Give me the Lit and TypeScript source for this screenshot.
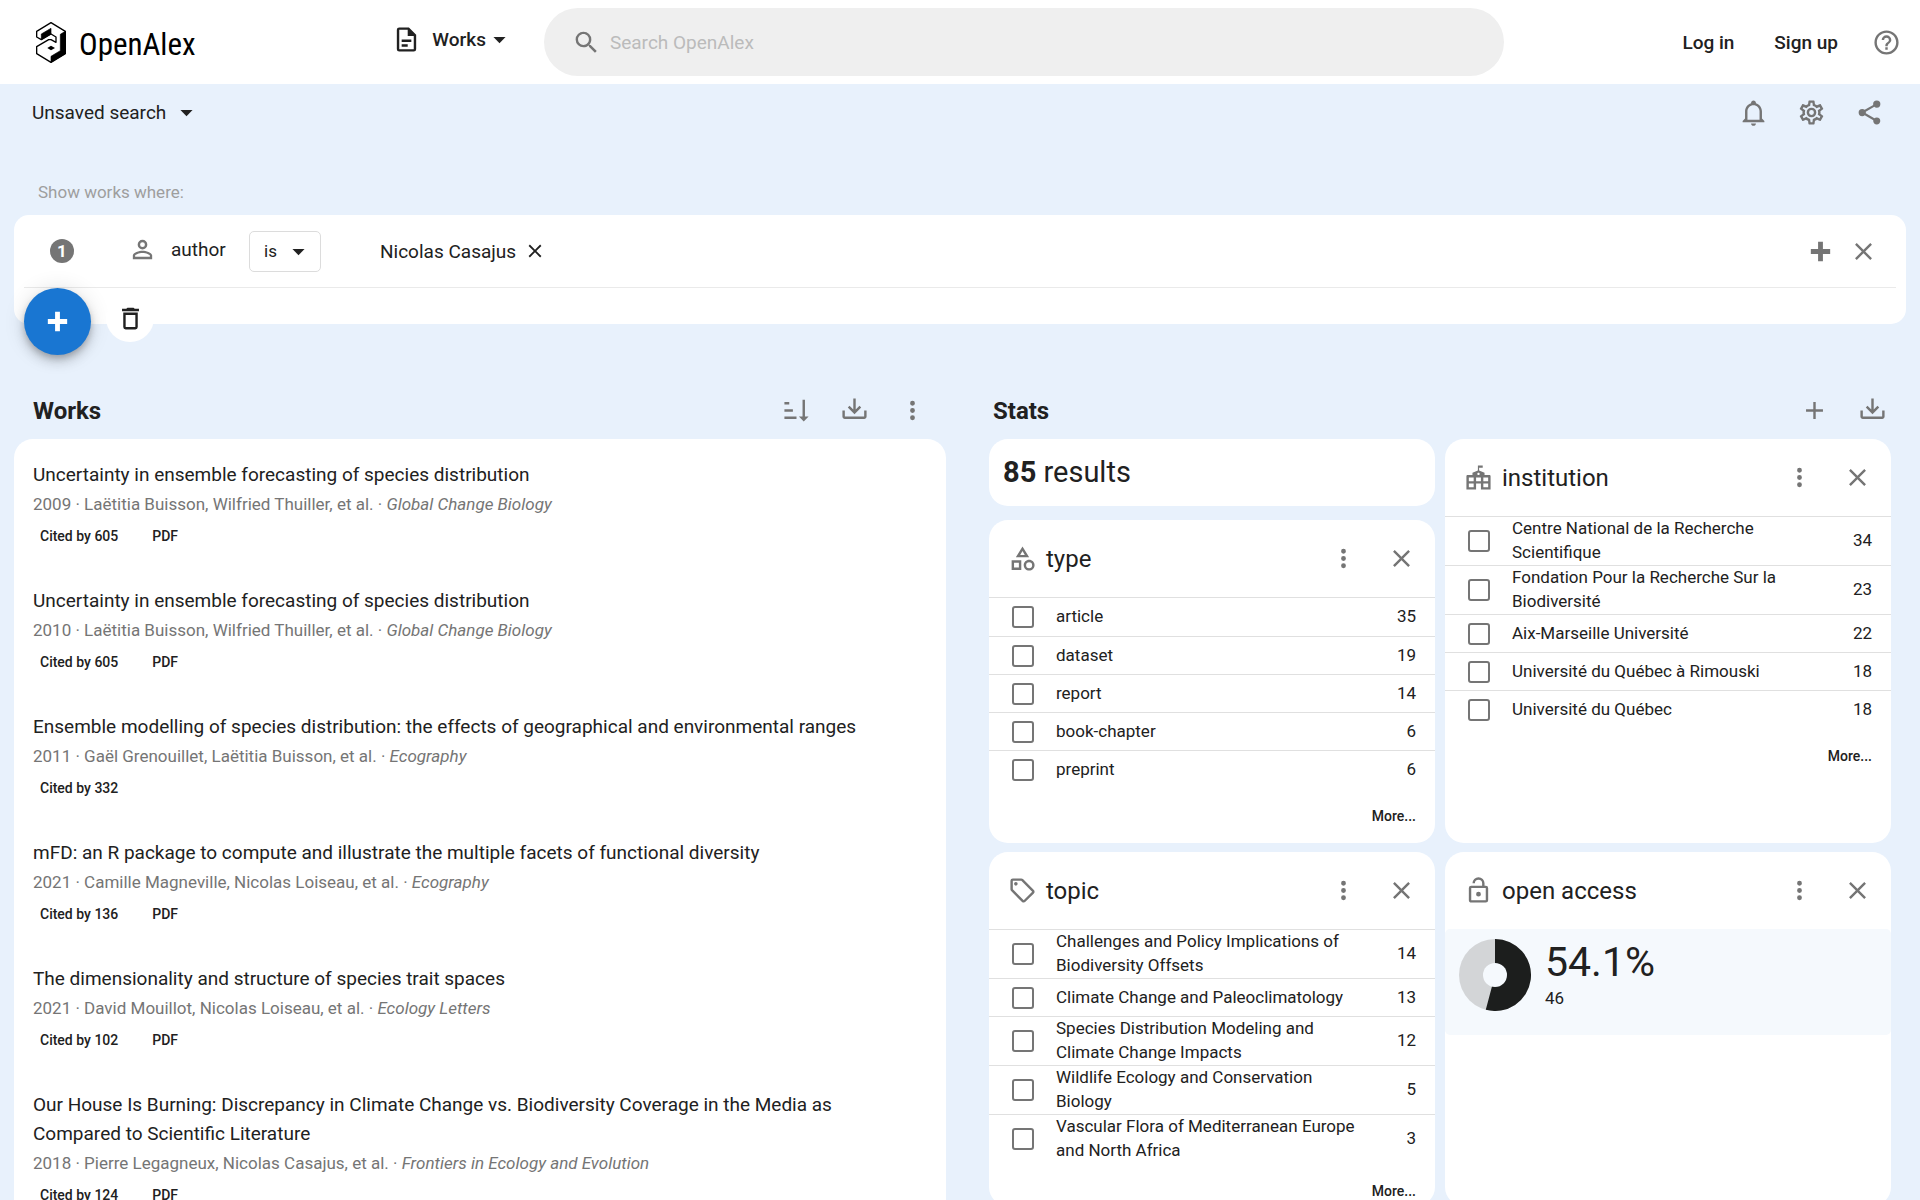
import { LitElement, html, css, svg, nothing } from "lit";
import { customElement, property } from "lit/decorators.js";

const ICONS: Record<string, string> = {
  document:
    "M6,2A2,2 0 0,0 4,4V20A2,2 0 0,0 6,22H18A2,2 0 0,0 20,20V8L14,2H6M6,4H13V9H18V20H6V4M8,12V14H16V12H8M8,16V18H13V16H8Z",
  menuDown: "M7,10L12,15L17,10H7Z",
  magnify:
    "M9.5,3A6.5,6.5 0 0,1 16,9.5C16,11.11 15.41,12.59 14.44,13.73L14.71,14H15.5L20.5,19L19,20.5L14,15.5V14.71L13.73,14.44C12.59,15.41 11.11,16 9.5,16A6.5,6.5 0 0,1 3,9.5A6.5,6.5 0 0,1 9.5,3M9.5,5C7,5 5,7 5,9.5C5,12 7,14 9.5,14C12,14 14,12 14,9.5C14,7 12,5 9.5,5Z",
  help: "M11,18H13V16H11V18M12,2A10,10 0 0,0 2,12A10,10 0 0,0 12,22A10,10 0 0,0 22,12A10,10 0 0,0 12,2M12,20C7.59,20 4,16.41 4,12C4,7.59 7.59,4 12,4C16.41,4 20,7.59 20,12C20,16.41 16.41,20 12,20M12,6A4,4 0 0,0 8,10H10A2,2 0 0,1 12,8A2,2 0 0,1 14,10C14,12 11,11.75 11,15H13C13,12.75 16,12.5 16,10A4,4 0 0,0 12,6Z",
  bell: "M10 21H14C14 22.1 13.1 23 12 23S10 22.1 10 21M21 19V20H3V19L5 17V11C5 7.9 7.03 5.17 10 4.29C10 4.19 10 4.1 10 4C10 2.9 10.9 2 12 2S14 2.9 14 4C14 4.1 14 4.19 14 4.29C16.97 5.17 19 7.9 19 11V17L21 19M17 11C17 8.24 14.76 6 12 6S7 8.24 7 11V18H17V11Z",
  cog: "M12,8A4,4 0 0,1 16,12A4,4 0 0,1 12,16A4,4 0 0,1 8,12A4,4 0 0,1 12,8M12,10A2,2 0 0,0 10,12A2,2 0 0,0 12,14A2,2 0 0,0 14,12A2,2 0 0,0 12,10M10,22C9.75,22 9.54,21.82 9.5,21.58L9.13,18.93C8.5,18.68 7.96,18.34 7.44,17.94L4.95,18.95C4.73,19.03 4.46,18.95 4.34,18.73L2.34,15.27C2.21,15.05 2.27,14.78 2.46,14.63L4.57,12.97L4.5,12L4.57,11L2.46,9.37C2.27,9.22 2.21,8.95 2.34,8.73L4.34,5.27C4.46,5.05 4.73,4.96 4.95,5.05L7.44,6.05C7.96,5.66 8.5,5.32 9.13,5.07L9.5,2.42C9.54,2.18 9.75,2 10,2H14C14.25,2 14.46,2.18 14.5,2.42L14.87,5.07C15.5,5.32 16.04,5.66 16.56,6.05L19.05,5.05C19.27,4.96 19.54,5.05 19.66,5.27L21.66,8.73C21.79,8.95 21.73,9.22 21.54,9.37L19.43,11L19.5,12L19.43,13L21.54,14.63C21.73,14.78 21.79,15.05 21.66,15.27L19.66,18.73C19.54,18.95 19.27,19.04 19.05,18.95L16.56,17.95C16.04,18.34 15.5,18.68 14.87,18.93L14.5,21.58C14.46,21.82 14.25,22 14,22H10M11.25,4L10.88,6.61C9.68,6.86 8.62,7.5 7.85,8.39L5.44,7.35L4.69,8.65L6.8,10.2C6.4,11.37 6.4,12.64 6.8,13.8L4.68,15.36L5.43,16.66L7.86,15.62C8.63,16.5 9.68,17.14 10.87,17.38L11.24,20H12.76L13.13,17.39C14.32,17.14 15.37,16.5 16.14,15.62L18.57,16.66L19.32,15.36L17.2,13.81C17.6,12.64 17.6,11.37 17.2,10.2L19.31,8.65L18.56,7.35L16.15,8.39C15.38,7.5 14.32,6.86 13.12,6.62L12.75,4H11.25Z",
  share:
    "M18,16.08C17.24,16.08 16.56,16.38 16.04,16.85L8.91,12.7C8.96,12.47 9,12.24 9,12C9,11.76 8.96,11.53 8.91,11.3L15.96,7.19C16.5,7.69 17.21,8 18,8A3,3 0 0,0 21,5A3,3 0 0,0 18,2A3,3 0 0,0 15,5C15,5.24 15.04,5.47 15.09,5.7L8.04,9.81C7.5,9.31 6.79,9 6,9A3,3 0 0,0 3,12A3,3 0 0,0 6,15C6.79,15 7.5,14.69 8.04,14.19L15.16,18.34C15.11,18.55 15.08,18.77 15.08,19C15.08,20.61 16.39,21.91 18,21.91C19.61,21.91 20.92,20.61 20.92,19A2.92,2.92 0 0,0 18,16.08Z",
  account:
    "M12,4A4,4 0 0,1 16,8A4,4 0 0,1 12,12A4,4 0 0,1 8,8A4,4 0 0,1 12,4M12,6A2,2 0 0,0 10,8A2,2 0 0,0 12,10A2,2 0 0,0 14,8A2,2 0 0,0 12,6M12,13C14.67,13 20,14.33 20,17V20H4V17C4,14.33 9.33,13 12,13M12,14.9C9.03,14.9 5.9,16.36 5.9,17V18.1H18.1V17C18.1,16.36 14.97,14.9 12,14.9Z",
  plus: "M19,13H13V19H11V13H5V11H11V5H13V11H19V13Z",
  plusThick: "M20 14H14V20H10V14H4V10H10V4H14V10H20V14Z",
  close:
    "M19,6.41L17.59,5L12,10.59L6.41,5L5,6.41L10.59,12L5,17.59L6.41,19L12,13.41L17.59,19L19,17.59L13.41,12L19,6.41Z",
  trash:
    "M6,19A2,2 0 0,0 8,21H16A2,2 0 0,0 18,19V7H6V19M8,9H16V19H8V9M15.5,4L14.5,3H9.5L8.5,4H5V6H19V4H15.5Z",
  sort: "M19 17H22L18 21L14 17H17V3H19V17M2 17H12V19H2V17M6 5V7H2V5H6M2 11H9V13H2V11Z",
  download:
    "M2 12H4V17H20V12H22V17C22 18.11 21.11 19 20 19H4C2.9 19 2 18.11 2 17V12M12 15L17.55 9.54L16.13 8.13L13 11.25V2H11V11.25L7.88 8.13L6.46 9.55L12 15Z",
  dots: "M12,16A2,2 0 0,1 14,18A2,2 0 0,1 12,20A2,2 0 0,1 10,18A2,2 0 0,1 12,16M12,10A2,2 0 0,1 14,12A2,2 0 0,1 12,14A2,2 0 0,1 10,12A2,2 0 0,1 12,10M12,4A2,2 0 0,1 14,6A2,2 0 0,1 12,8A2,2 0 0,1 10,6A2,2 0 0,1 12,4Z",
  shapes:
    "M11,13.5V21.5H3V13.5H11M9,15.5H5V19.5H9V15.5M12,2L17.5,11H6.5L12,2M12,5.86L10.08,9H13.92L12,5.86M17.5,13C20,13 22,15 22,17.5C22,20 20,22 17.5,22C15,22 13,20 13,17.5C13,15 15,13 17.5,13M17.5,15A2.5,2.5 0 0,0 15,17.5A2.5,2.5 0 0,0 17.5,20A2.5,2.5 0 0,0 20,17.5A2.5,2.5 0 0,0 17.5,15Z",
  tag: "M21.41 11.58L12.41 2.58A2 2 0 0 0 11 2H4A2 2 0 0 0 2 4V11A2 2 0 0 0 2.59 12.42L11.59 21.42A2 2 0 0 0 13 22A2 2 0 0 0 14.41 21.41L21.41 14.41A2 2 0 0 0 22 13A2 2 0 0 0 21.41 11.58M13 20L4 11V4H11L20 13M6.5 5A1.5 1.5 0 1 1 5 6.5A1.5 1.5 0 0 1 6.5 5Z",
  lockOpen:
    "M18,20V10H6V20H18M18,8A2,2 0 0,1 20,10V20A2,2 0 0,1 18,22H6C4.89,22 4,21.1 4,20V10A2,2 0 0,1 6,8H15V6A3,3 0 0,0 12,3A3,3 0 0,0 9,6H7A5,5 0 0,1 12,1A5,5 0 0,1 17,6V8H18M12,17A2,2 0 0,1 10,15A2,2 0 0,1 12,13A2,2 0 0,1 14,15A2,2 0 0,1 12,17Z",
  townHall:
    "M21 10H17V8L12.5 6.2V4H15.5V2H11.5V6.2L7 8V10H3C2.45 10 2 10.45 2 11V22H10V17H14V22H22V11C22 10.45 21.55 10 21 10M8 20H4V17H8V20M8 15H4V12H8V15M12 8C12.55 8 13 8.45 13 9S12.55 10 12 10 11 9.55 11 9 11.45 8 12 8M14 15H10V12H14V15M20 20H16V17H20V20M20 15H16V12H20V15Z",
};

const icon = (name: string, cls = "") => html`
  <svg class="icon ${cls}" viewBox="0 0 24 24" aria-hidden="true">${svg`<path d=${ICONS[name]}></path>`}</svg>
`;

const base = css`
  * {
    box-sizing: border-box;
  }
  h1, h2, h3, p, ul {
    margin: 0;
    padding: 0;
    font-size: inherit;
    font-weight: 400;
  }
  ul {
    list-style: none;
  }
  a {
    color: inherit;
    text-decoration: none;
  }
  button {
    display: flex;
    align-items: center;
    justify-content: center;
    padding: 0;
    border: 0;
    background: none;
    color: inherit;
    font: inherit;
    cursor: pointer;
  }
  .icon {
    display: block;
    flex: none;
    width: 29px;
    height: 29px;
    fill: currentColor;
  }
  .muted {
    color: #757575;
  }
  .icon-button {
    width: 58px;
    height: 58px;
    color: #757575;
  }
`;

interface Work {
  title: string;
  year: number;
  authors: string;
  venue: string;
  cited: number;
  pdf: boolean;
}

const WORKS: Work[] = [
  { title: "Uncertainty in ensemble forecasting of species distribution", year: 2009, authors: "Laëtitia Buisson, Wilfried Thuiller, et al.", venue: "Global Change Biology", cited: 605, pdf: true },
  { title: "Uncertainty in ensemble forecasting of species distribution", year: 2010, authors: "Laëtitia Buisson, Wilfried Thuiller, et al.", venue: "Global Change Biology", cited: 605, pdf: true },
  { title: "Ensemble modelling of species distribution: the effects of geographical and environmental ranges", year: 2011, authors: "Gaël Grenouillet, Laëtitia Buisson, et al.", venue: "Ecography", cited: 332, pdf: false },
  { title: "mFD: an R package to compute and illustrate the multiple facets of functional diversity", year: 2021, authors: "Camille Magneville, Nicolas Loiseau, et al.", venue: "Ecography", cited: 136, pdf: true },
  { title: "The dimensionality and structure of species trait spaces", year: 2021, authors: "David Mouillot, Nicolas Loiseau, et al.", venue: "Ecology Letters", cited: 102, pdf: true },
  { title: "Our House Is Burning: Discrepancy in Climate Change vs. Biodiversity Coverage in the Media as Compared to Scientific Literature", year: 2018, authors: "Pierre Legagneux, Nicolas Casajus, et al.", venue: "Frontiers in Ecology and Evolution", cited: 124, pdf: true },
];

type Row = [string, number];

const TYPES: Row[] = [["article", 35], ["dataset", 19], ["report", 14], ["book-chapter", 6], ["preprint", 6]];
const INSTITUTIONS: Row[] = [
  ["Centre National de la Recherche Scientifique", 34],
  ["Fondation Pour la Recherche Sur la Biodiversité", 23],
  ["Aix-Marseille Université", 22],
  ["Université du Québec à Rimouski", 18],
  ["Université du Québec", 18],
];
const TOPICS: Row[] = [
  ["Challenges and Policy Implications of Biodiversity Offsets", 14],
  ["Climate Change and Paleoclimatology", 13],
  ["Species Distribution Modeling and Climate Change Impacts", 12],
  ["Wildlife Ecology and Conservation Biology", 5],
  ["Vascular Flora of Mediterranean Europe and North Africa", 3],
];

@customElement("stat-card")
class StatCard extends LitElement {
  @property() name = "";
  @property() glyph = "";
  @property({ attribute: false }) rows: Row[] = [];

  static styles = [
    base,
    css`
      :host {
        display: block;
        background: #fff;
        border-radius: 19px;
        overflow: hidden;
      }
      .head {
        display: flex;
        align-items: center;
        height: 77px;
        padding: 0 5px 0 19px;
      }
      .name {
        flex: 1;
        margin-left: 9px;
        font-size: 24px;
        line-height: 38px;
      }
      .row {
        display: flex;
        align-items: center;
        min-height: 39px;
        padding-right: 19px;
        border-top: 1px solid #e0e0e0;
        font-size: 17px;
        line-height: 24px;
      }
      .row + .row {
        min-height: 38px;
      }
      .box {
        flex: none;
        appearance: none;
        width: 22px;
        height: 22px;
        margin: 0 22px 0 23px;
        border: 2px solid #757575;
        border-radius: 3px;
      }
      .label {
        flex: 1;
        padding-right: 40px;
      }
      .value {
        min-width: 20px;
        text-align: right;
      }
      .label,
      .value {
        margin-top: -1px;
        margin-bottom: 1px;
      }
      .more {
        margin: 13px 0 0 auto;
        padding: 0 19px;
        height: 30px;
        font-size: 14px;
        font-weight: 500;
      }
    `,
  ];

  render() {
    return html`
      <div class="head">
        ${icon(this.glyph, "muted")}
        <h3 class="name">${this.name}</h3>
        <button class="icon-button" aria-label="${this.name} options">${icon("dots")}</button>
        <button class="icon-button" aria-label="Remove ${this.name}">${icon("close")}</button>
      </div>
      ${this.rows.length
        ? html`
            <ul>
              ${this.rows.map(
                ([label, count], i) => html`
                  <li class="row">
                    <input class="box" type="checkbox" id="box-${i}" />
                    <label class="label" for="box-${i}">${label}</label>
                    <span class="value">${count}</span>
                  </li>
                `
              )}
            </ul>
            <button class="more">More...</button>
          `
        : nothing}
      <slot></slot>
    `;
  }
}

@customElement("app-root")
class AppRoot extends LitElement {
  static styles = [
    base,
    css`
      :host {
        display: block;
        height: 100vh;
        overflow: hidden;
        background: #e8f1fc;
        color: #212121;
        font-family: Roboto, "Liberation Sans", sans-serif;
        font-size: 19px;
        line-height: 29px;
      }
      .header {
        display: grid;
        grid-template-columns: 28.33% 50% 1fr;
        align-items: center;
        height: 84px;
        background: #fff;
      }
      .start {
        display: flex;
        align-items: center;
        justify-content: space-between;
        padding: 0 30px 0 35px;
      }
      .brand {
        display: flex;
        align-items: center;
        gap: 12px;
        color: #000;
        font-family: "Liberation Sans Narrow", "Roboto Condensed", Roboto, sans-serif;
        font-size: 31px;
        line-height: 40px;
      }
      .brand span {
        padding-top: 6px;
      }
      .logo {
        width: 32px;
        height: 43px;
      }
      .entity {
        gap: 11px;
        padding-bottom: 5px;
        font-weight: 500;
      }
      .entity .caret {
        margin-left: -12px;
      }
      .search {
        display: flex;
        align-items: center;
        gap: 9px;
        height: 68px;
        padding: 0 28px;
        border-radius: 34px;
        background: #efefef;
      }
      .search input {
        flex: 1;
        min-width: 0;
        padding: 0;
        border: 0;
        outline: 0;
        background: none;
        color: inherit;
        font: inherit;
      }
      .search input::placeholder {
        color: #bbb;
        opacity: 1;
      }
      .end {
        display: flex;
        align-items: center;
        justify-content: flex-end;
        gap: 40px;
        padding-right: 19px;
        font-weight: 500;
      }
      .end .icon-button {
        width: 29px;
        margin-left: -6px;
      }
      .toolbar {
        display: flex;
        align-items: center;
        justify-content: space-between;
        height: 57px;
        padding: 0 22px 0 32px;
      }
      .saved {
        gap: 6px;
      }
      .actions {
        display: flex;
        align-items: center;
      }
      .prompt {
        margin-top: 37px;
        padding: 0 38px;
        color: #9e9e9e;
        font-size: 17px;
        line-height: 28px;
      }
      .filters {
        margin: 9px 14px 0;
        padding: 0 10px;
        height: 109px;
        border-radius: 15px;
        background: #fff;
      }
      .filter {
        display: flex;
        align-items: center;
        height: 73px;
        border-bottom: 1px solid #eaeaea;
      }
      .number {
        display: flex;
        align-items: center;
        justify-content: center;
        width: 24px;
        height: 24px;
        margin: 0 54px 0 26px;
        border-radius: 50%;
        background: #757575;
        color: #fff;
        font-size: 17px;
        font-weight: 700;
      }
      .field {
        display: flex;
        align-items: center;
        gap: 14px;
        width: 121px;
        padding-bottom: 4px;
      }
      .operator {
        position: relative;
        display: flex;
        align-items: center;
        margin-right: 59px;
      }
      .operator select {
        appearance: none;
        width: 72px;
        height: 41px;
        padding: 0 14px;
        border: 1px solid #dcdcdc;
        border-radius: 5px;
        background: #fff;
        color: inherit;
        font: inherit;
        font-size: 17px;
      }
      .operator .icon {
        position: absolute;
        right: 8px;
        pointer-events: none;
      }
      .person {
        gap: 8px;
        margin-right: auto;
      }
      .person .icon {
        width: 22px;
        height: 22px;
      }
      .row-actions {
        display: flex;
        gap: 14px;
        margin-right: 18px;
      }
      .row-actions button {
        width: 29px;
        height: 29px;
      }
      .under {
        display: flex;
        align-items: flex-start;
        gap: 15px;
      }
      .add {
        width: 67px;
        height: 67px;
        border-radius: 50%;
        background: #1976d2;
        color: #fff;
        box-shadow: 0 4px 6px -1px rgba(0, 0, 0, 0.2), 0 7px 12px rgba(0, 0, 0, 0.14), 0 1px 22px rgba(0, 0, 0, 0.12);
      }
      .clear {
        width: 48px;
        height: 48px;
        margin-top: 6px;
        border-radius: 50%;
        background: #fff;
      }
      .columns {
        display: grid;
        grid-template-columns: 1fr 1fr;
        margin-top: 57px;
      }
      .works {
        padding: 0 14px;
      }
      .stats {
        padding: 0 29px;
      }
      .column-head {
        display: flex;
        align-items: center;
        height: 58px;
      }
      .works .column-head {
        padding: 0 5px 0 19px;
      }
      .stats .column-head {
        padding: 0 0 0 4px;
        margin-right: -10px;
      }
      .column-title {
        flex: 1;
        padding-top: 2px;
        font-size: 24px;
        font-weight: 700;
      }
      .results {
        padding: 21px 34px 21px 19px;
        border-radius: 19px;
        background: #fff;
      }
      .work {
        padding-bottom: 34px;
      }
      .meta {
        font-size: 17px;
        line-height: 30px;
        color: #757575;
      }
      .chips {
        display: flex;
        gap: 34px;
        padding: 1px 0 0 7px;
        font-size: 14px;
        line-height: 32px;
        font-weight: 500;
      }
      .cards {
        display: grid;
        grid-template-columns: 1fr 1fr;
        gap: 9px 10px;
      }
      .stack {
        display: flex;
        flex-direction: column;
        gap: 14px;
      }
      .stack stat-card {
        height: 323px;
      }
      .count {
        height: 67px;
        padding: 0 14px;
        border-radius: 19px;
        background: #fff;
        font-size: 29px;
        line-height: 66px;
      }
      .share {
        display: flex;
        gap: 14px;
        height: 106px;
        padding: 10px 14px;
        border-radius: 5px;
        background: #f5f9fd;
      }
      .donut {
        width: 72px;
        height: 72px;
      }
      .percent {
        font-size: 41px;
        line-height: 47px;
      }
      .amount {
        font-size: 17px;
        line-height: 24px;
      }
    `,
  ];

  private renderLogo() {
    return html`
      <svg class="logo" viewBox="16 15 96 129" aria-hidden="true">
        <path
          d="M64 20L21 46V63L35 71L64 54L79 63V79L64 71H57L21 92V113L64 139L107 113V46Z"
          fill="#fff" stroke="#000" stroke-width="4" stroke-linejoin="round"></path>
        <path d="M35 71V54L64 37V54Z" stroke="#000" stroke-width="2"></path>
        <path d="M107 46V113L64 139V121L92 104V55Z" stroke="#000" stroke-width="2"></path>
        <path d="M53 96L64 89L76 96L64 103Z"></path>
      </svg>
    `;
  }

  private renderWork(work: Work) {
    return html`
      <li class="work">
        <a href="#"><h3 class="title">${work.title}</h3></a>
        <p class="meta">${work.year} · ${work.authors} · <i>${work.venue}</i></p>
        <div class="chips">
          <a href="#">Cited by ${work.cited}</a>
          ${work.pdf ? html`<a href="#">PDF</a>` : nothing}
        </div>
      </li>
    `;
  }

  private renderDonut(share: number) {
    const angle = 2 * Math.PI * share;
    const x = 36 + 36 * Math.sin(angle);
    const y = 36 - 36 * Math.cos(angle);
    return html`
      <svg class="donut" viewBox="0 0 72 72" role="img" aria-label="Open access share">
        <circle cx="36" cy="36" r="36" fill="#d3d5d7"></circle>
        <path d="M36 36V0A36 36 0 ${share > 0.5 ? 1 : 0} 1 ${x} ${y}Z" fill="#1c1e1d"></path>
        <circle cx="36" cy="36" r="12" fill="#f5f9fd"></circle>
      </svg>
    `;
  }

  render() {
    return html`
      <header class="header">
        <div class="start">
          <a class="brand" href="#">${this.renderLogo()}<span>OpenAlex</span></a>
          <button class="entity">${icon("document")}<span>Works</span>${icon("menuDown", "caret")}</button>
        </div>
        <label class="search">
          ${icon("magnify", "muted")}
          <input type="search" placeholder="Search OpenAlex" aria-label="Search OpenAlex" />
        </label>
        <nav class="end">
          <a href="#">Log in</a>
          <a href="#">Sign up</a>
          <button class="icon-button" aria-label="Help">${icon("help")}</button>
        </nav>
      </header>

      <div class="toolbar">
        <button class="saved"><span>Unsaved search</span>${icon("menuDown")}</button>
        <div class="actions">
          <button class="icon-button" aria-label="Alerts">${icon("bell")}</button>
          <button class="icon-button" aria-label="Settings">${icon("cog")}</button>
          <button class="icon-button" aria-label="Share">${icon("share")}</button>
        </div>
      </div>

      <p class="prompt">Show works where:</p>
      <section class="filters">
        <div class="filter">
          <span class="number">1</span>
          <span class="field">${icon("account", "muted")}<span>author</span></span>
          <span class="operator">
            <select aria-label="Operator"><option>is</option></select>
            ${icon("menuDown")}
          </span>
          <button class="person"><span>Nicolas Casajus</span>${icon("close")}</button>
          <span class="row-actions muted">
            <button aria-label="Add value">${icon("plusThick")}</button>
            <button aria-label="Remove filter">${icon("close")}</button>
          </span>
        </div>
        <div class="under">
          <button class="add" aria-label="Add filter">${icon("plusThick")}</button>
          <button class="clear" aria-label="Clear filters">${icon("trash")}</button>
        </div>
      </section>

      <main class="columns">
        <section class="works">
          <div class="column-head">
            <h2 class="column-title">Works</h2>
            <button class="icon-button" aria-label="Sort">${icon("sort")}</button>
            <button class="icon-button" aria-label="Export works">${icon("download")}</button>
            <button class="icon-button" aria-label="More options">${icon("dots")}</button>
          </div>
          <ul class="results">
            ${WORKS.map((work) => this.renderWork(work))}
          </ul>
        </section>

        <section class="stats">
          <div class="column-head">
            <h2 class="column-title">Stats</h2>
            <button class="icon-button" aria-label="Add stat">${icon("plus")}</button>
            <button class="icon-button" aria-label="Export stats">${icon("download")}</button>
          </div>
          <div class="cards">
            <div class="stack">
              <p class="count"><b>85</b> results</p>
              <stat-card name="type" glyph="shapes" .rows=${TYPES}></stat-card>
            </div>
            <stat-card name="institution" glyph="townHall" .rows=${INSTITUTIONS}></stat-card>
            <stat-card name="topic" glyph="tag" .rows=${TOPICS}></stat-card>
            <stat-card name="open access" glyph="lockOpen">
              <div class="share">
                ${this.renderDonut(46 / 85)}
                <div>
                  <p class="percent">54.1%</p>
                  <p class="amount">46</p>
                </div>
              </div>
            </stat-card>
          </div>
        </section>
      </main>
    `;
  }
}
